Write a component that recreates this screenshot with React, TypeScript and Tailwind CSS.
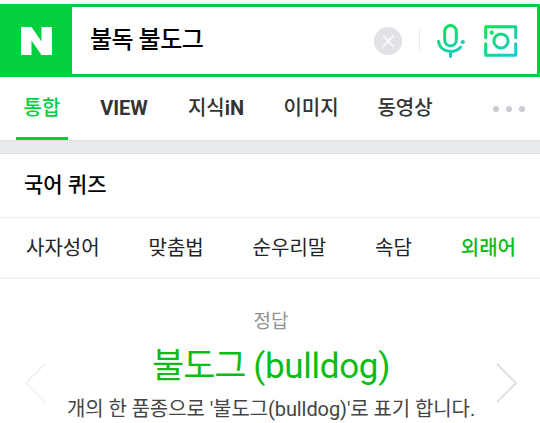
const tabs = [
  { label: '통합', className: 'w-[52px] mr-[31px] text-[#03cf3f]' },
  { label: 'VIEW', className: 'w-[50px] mr-[39px]' },
  { label: '지식iN', className: 'w-[56px] mr-[39px]' },
  { label: '이미지', className: 'w-[56px] mr-[38px]' },
  { label: '동영상', className: 'w-[56px]' },
];

const categories = ['사자성어', '맞춤법', '순우리말', '속담', '외래어'];

const Logo = () => (
  <svg width="31" height="28" viewBox="0 0 31 28" fill="#fff">
    <path d="M0 0H10.5L20.5 14.5V0H31V28H20.5L10.5 13.5V28H0Z" />
  </svg>
);

const ClearIcon = () => (
  <svg width="28" height="28" viewBox="0 0 28 28">
    <circle cx="14" cy="14" r="14" fill="#e0e2e6" />
    <path d="M9 8.5L19.5 19.5M19.5 8.5L9 19.5" stroke="#fff" strokeWidth="1.4" />
  </svg>
);

const MicIcon = () => (
  <svg width="28" height="34" viewBox="0 0 28 34" fill="none">
    <defs>
      <linearGradient id="mic" x1="6" y1="0" x2="22" y2="34" gradientUnits="userSpaceOnUse">
        <stop stopColor="#08e34c" />
        <stop offset="1" stopColor="#20c9d2" />
      </linearGradient>
    </defs>
    <g stroke="url(#mic)" strokeWidth="3" strokeLinecap="round">
      <rect x="7.7" y="1.5" width="11.6" height="20.5" rx="5.8" />
      <path d="M1.5 17.5C2.5 23.5 7.2 27.4 13.5 27.4C18.4 27.4 21.8 25.4 23.6 23.2M13.5 27.4V32.5" />
    </g>
    <circle cx="25.8" cy="18" r="2.1" fill="#20c9bd" />
  </svg>
);

const CameraIcon = () => (
  <svg width="34" height="32" viewBox="0 0 34 32" fill="none">
    <defs>
      <linearGradient id="camera" x1="0" y1="0" x2="34" y2="32" gradientUnits="userSpaceOnUse">
        <stop stopColor="#08e83f" />
        <stop offset="1" stopColor="#20c3e6" />
      </linearGradient>
    </defs>
    <g stroke="url(#camera)" strokeWidth="3" strokeLinecap="round" strokeLinejoin="round">
      <path d="M1.7 12.7V1.7H31.7V12.7M31.7 18.8V30.3H1.7V18.8" />
      <circle cx="17" cy="16" r="7.1" />
    </g>
    <circle cx="7.7" cy="7.7" r="2.1" fill="#12df69" />
  </svg>
);

const App = () => {
  return (
    <div className="h-[423px] w-[540px] overflow-hidden bg-white font-[Roboto,'Noto_Sans_CJK_KR',sans-serif]">
      {/* Search bar */}
      <div className="bg-[#f8f8f8] pt-1">
        <div className="flex h-[73px] items-stretch border-[3px] border-l-0 border-[#03cf3f] bg-white">
          <div className="-my-[3px] flex w-[72px] items-center justify-center bg-[#03cf3f]">
            <Logo />
          </div>
          <div className="flex flex-1 items-center pl-[18px]">
            <span className="flex-1 pb-[2px] text-[24px] leading-8 font-medium tracking-[-0.5px] text-black">불독 불도그</span>
            <ClearIcon />
            <div className="ml-[17px] h-[23px] w-px bg-[#e8eaec]" />
            <div className="ml-[17px] flex items-center gap-[19px] pr-[19px]">
              <MicIcon />
              <CameraIcon />
            </div>
          </div>
        </div>
      </div>

      {/* Search tabs */}
      <div className="flex h-[63px] items-stretch pl-4 text-[20px] font-medium text-[#333]">
        {tabs.map((tab, i) => (
          <div
            key={tab.label}
            className={`flex justify-center whitespace-nowrap pt-[15px] leading-8 ${tab.className} ${
              i === 0 ? 'border-b-[3px] border-[#03cf3f]' : ''
            }`}
          >
            {tab.label === '지식iN' ? (
              <>
                지식<b className="font-bold">iN</b>
              </>
            ) : (
              <span className={tab.label === 'VIEW' ? 'font-bold' : ''}>{tab.label}</span>
            )}
          </div>
        ))}
        <div className="flex flex-1 items-center justify-end gap-[7px] pr-[15px]">
          <i className="size-[6px] rounded-full bg-[#c8cbd2]" />
          <i className="size-[6px] rounded-full bg-[#c8cbd2]" />
          <i className="size-[6px] rounded-full bg-[#c8cbd2]" />
        </div>
      </div>
      <div className="h-[14px] border-y border-t-[#e1e4e5] border-b-[#dae1e4] bg-[#e7ebee]" />

      {/* Quiz */}
      <h2 className="h-16 border-b border-[#e9edee] pt-[15px] pl-6 text-[21px] leading-8 font-medium text-black">
        국어 퀴즈
      </h2>
      <div className="flex h-[61px] items-center justify-between border-b-2 border-[#f1f2f3] pr-[24px] pl-[26px] text-[20px] text-[#222]">
        {categories.map((name) => (
          <span key={name} className={name === '외래어' ? 'font-medium text-[#0dbc15]' : ''}>
            {name}
          </span>
        ))}
      </div>

      <div className="flex justify-between pt-[26px] pr-[23px] pl-[25px]">
        <svg className="mt-[58px] shrink-0" width="21" height="40" viewBox="0 0 21 40" fill="none" stroke="#eee" strokeWidth="1.4">
          <path d="M20 1L1 20L20 39" />
        </svg>
        <div className="flex flex-col items-center whitespace-nowrap">
          <p className="pt-px text-[19px] leading-8 text-[#929292]">정답</p>
          <p className="mt-[3px] text-[35px] leading-[52px] text-[#0dbc15]">
            <span className="tracking-[-1px]">불도그 </span>
            <span className="tracking-[-0.3px]">(bulldog)</span>
          </p>
          <p className="text-[20px] leading-8 tracking-[-0.09px] text-[#444]">개의 한 품종으로 '불도그(bulldog)'로 표기 합니다.</p>
        </div>
        <svg className="mt-[58px] shrink-0" width="21" height="40" viewBox="0 0 21 40" fill="none" stroke="#d5d5d5" strokeWidth="1.4">
          <path d="M1 1L20 20L1 39" />
        </svg>
      </div>
    </div>
  );
};

export default App;
